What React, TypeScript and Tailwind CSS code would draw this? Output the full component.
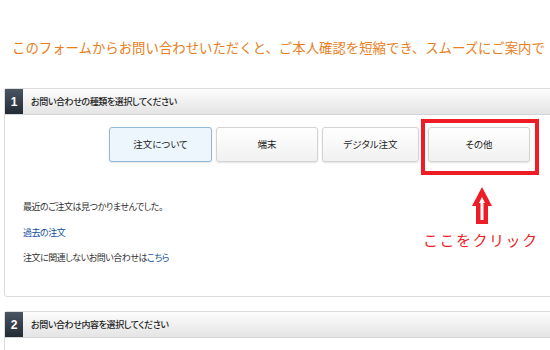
import React from 'react';

const jp = "font-['Noto_Sans_CJK_JP','Noto_Sans',sans-serif]";

const SectionHeader: React.FC<{ num: string; title: string }> = ({ num, title }) => (
    <div className="flex h-[26px] items-stretch border-b border-[#d6d6d6] bg-gradient-to-b from-[#fdfdfd] to-[#e4e4e4]">
        <div className="flex w-[18px] items-center justify-center bg-gradient-to-b from-[#4b5562] to-[#232b35] text-[12px] font-bold text-white font-['Liberation_Sans',sans-serif]">
            {num}
        </div>
        <div className="ml-[8px] flex items-center text-[9px] font-medium tracking-[-0.4px] text-[#222] [font-feature-settings:'palt']">
            {title}
        </div>
    </div>
);

const TypeButton: React.FC<{ label: string; width: string; active?: boolean }> = ({ label, width, active }) => (
    <div
        className={`flex h-[35px] items-center justify-center rounded-[3px] border text-[9.5px] text-[#222] shadow-[0_1px_2px_rgba(0,0,0,0.12)] [font-feature-settings:'palt'] ${width} ${
            active ? 'border-[#8fb8da] bg-[#edf6fd]' : 'border-[#d3d3d3] bg-gradient-to-b from-white to-[#f1f1f1]'
        }`}
    >
        {label}
    </div>
);

const App: React.FC = () => {
    return (
        <div className={`h-[350px] w-[550px] overflow-hidden bg-white ${jp}`}>
            <div className="pl-[12px] pt-[38px] whitespace-nowrap text-[13.4px] leading-[18px] text-[#e8801e]">
                このフォームからお問い合わせいただくと、ご本人確認を短縮でき、スムーズにご案内で
            </div>

            <div className="ml-[4px] mt-[32px] w-[600px] rounded-[3px] border border-[#dcdcdc]">
                <SectionHeader num="1" title="お問い合わせの種類を選択してください" />
                <div className="relative h-[181px]">
                    <div className="flex pl-[104px] pt-[12px]">
                        <TypeButton label="注文について" width="w-[103px]" active />
                        <div className="w-[4px]" />
                        <TypeButton label="端末" width="w-[102px]" />
                        <div className="w-[4px]" />
                        <TypeButton label="デジタル注文" width="w-[97px]" />
                        <div className="w-[9px]" />
                        <TypeButton label="その他" width="w-[102px]" />
                    </div>

                    <div className="pl-[18px] pt-[37px] text-[9px] leading-[16px] tracking-[-0.5px] text-[#333] [font-feature-settings:'palt']">
                        <p>最近のご注文は見つかりませんでした。</p>
                        <p className="mt-[10px] text-[#11509e]">過去の注文</p>
                        <p className="mt-[9px]">
                            注文に関連しないお問い合わせは<span className="text-[#11509e]">こちら</span>
                        </p>
                    </div>

                    {/* annotation */}
                    <div className="absolute left-[416px] top-[4px] h-[56px] w-[118px] border-[4px] border-[#ee1c25]" />
                    <svg className="absolute left-[466px] top-[71px]" width="22" height="40" viewBox="0 0 22 40">
                        <path d="M11 1 L21 20 L17 20 L17 38 L5 38 L5 20 L1 20 Z" fill="#ee1c25" />
                        <path d="M11 11 L14 17 L12.5 17 L12.5 34 L9.5 34 L9.5 17 L8 17 Z" fill="#fff" />
                    </svg>
                    <div className="absolute left-[418px] top-[116px] whitespace-nowrap text-[15px] leading-[18px] tracking-[1.5px] text-[#ee1c25]">
                        ここをクリック
                    </div>
                </div>
            </div>

            <div className="ml-[4px] mt-[14px] w-[600px] rounded-[3px] border border-[#dcdcdc]">
                <SectionHeader num="2" title="お問い合わせ内容を選択してください" />
                <div className="h-[40px]" />
            </div>
        </div>
    );
};

export default App;
